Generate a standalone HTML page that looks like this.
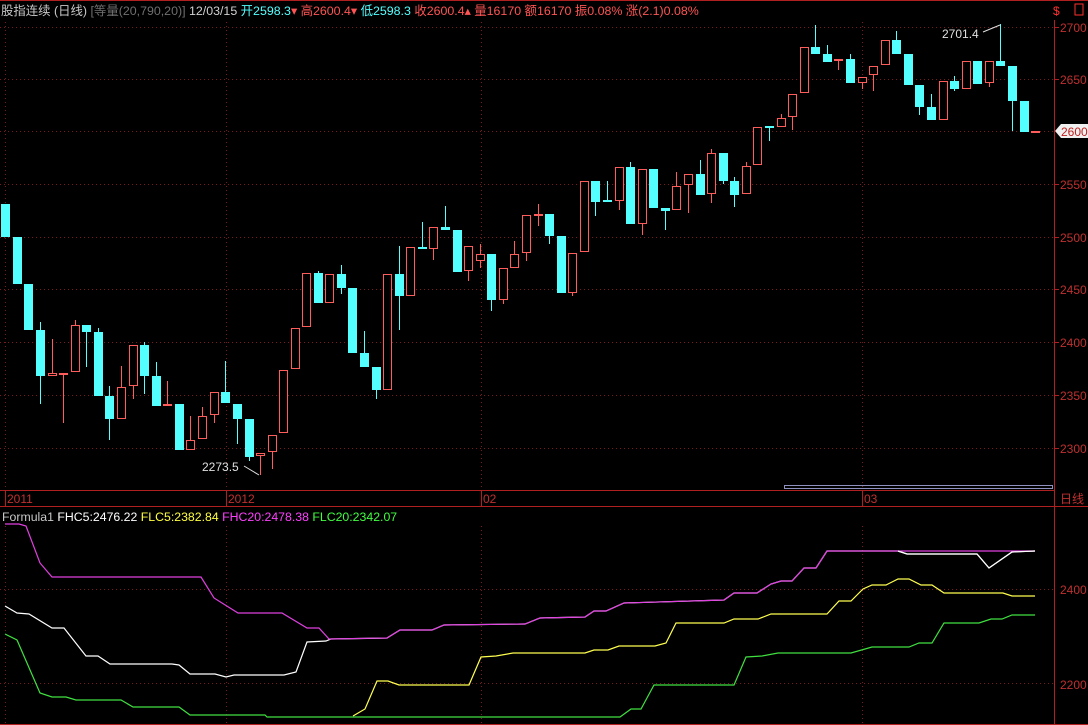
<!DOCTYPE html>
<html><head><meta charset="utf-8"><style>
html,body{margin:0;padding:0;background:#000;width:1088px;height:725px;overflow:hidden}
svg{display:block}
text{font-family:"Liberation Sans","Noto Sans CJK SC",sans-serif}
</style></head><body>
<svg id="s" width="1088" height="725" viewBox="0 0 1088 725" xmlns="http://www.w3.org/2000/svg">
<rect width="1088" height="725" fill="#000"/>
<line x1="0" y1="0.5" x2="1088" y2="0.5" stroke="#b02020"/>
<text y="15" font-size="12.4" fill="#c8c8c8"><tspan x="1">股指连续 (日线)</tspan><tspan fill="#707070"> [等量(20,790,20)]</tspan><tspan fill="#d0d0d0"> 12/03/15 </tspan><tspan fill="#54ffff">开2598.3</tspan><tspan fill="#ff5454">▾ 高2600.4</tspan><tspan fill="#ff5454">▾ </tspan><tspan fill="#54ffff">低2598.3 </tspan><tspan fill="#ff5454">收2600.4▴ 量16170 额16170 振0.08% 涨(2.1)0.08%</tspan></text>
<text x="1053" y="15" font-size="12" fill="#ff3030">$</text>
<rect x="1075" y="4" width="8" height="11" fill="none" stroke="#ff3030"/>
<g id="grid" stroke="#7a1a1a" stroke-dasharray="1,3"></g>
<line x1="1054.5" y1="20" x2="1054.5" y2="725" stroke="#b02020"/>
<line x1="0" y1="490.5" x2="1054" y2="490.5" stroke="#b02020"/>
<line x1="0" y1="506.5" x2="1088" y2="506.5" stroke="#b02020"/>
<line x1="0" y1="724.5" x2="1088" y2="724.5" stroke="#b02020"/>
<g stroke="#b02020"><line x1="5.5" y1="491" x2="5.5" y2="506"/><line x1="226.5" y1="491" x2="226.5" y2="506"/><line x1="481.5" y1="491" x2="481.5" y2="506"/><line x1="862.5" y1="491" x2="862.5" y2="506"/></g>
<g font-size="12" fill="#c03030"><text x="7" y="503">2011</text><text x="228" y="503">2012</text><text x="483" y="503">02</text><text x="864" y="503">03</text><text x="1060" y="503" fill="#c03030">日线</text></g>
<g font-size="12" fill="#c03030" id="ax"></g>
<rect x="784.5" y="485.5" width="268" height="3" fill="none" stroke="#9090c0"/>
<g id="c"></g>
<polygon points="1055,131 1061,124 1088,124 1088,138 1061,138" fill="#f0f0f0"/>
<text x="1061" y="136" font-size="12" fill="#c02020">2600</text>
<text x="202" y="471" font-size="12" fill="#e0e0e0">2273.5</text>
<line x1="244" y1="466" x2="259" y2="475" stroke="#e0e0e0"/>
<text x="942" y="38" font-size="12" fill="#e0e0e0">2701.4</text>
<line x1="983" y1="32" x2="1000" y2="25" stroke="#e0e0e0"/>
<text y="521" font-size="12.3"><tspan x="2" fill="#c8c8c8">Formula1 </tspan><tspan fill="#ffffff">FHC5:2476.22 </tspan><tspan fill="#ffff40"> FLC5:2382.84 </tspan><tspan fill="#ff40ff"> FHC20:2478.38 </tspan><tspan fill="#40ff40"> FLC20:2342.07</tspan></text>
<g fill="none" stroke-width="1.2">
<polyline stroke="#ffffff" points="5,606 17,613 29,614 52,628 64,628 86,656 98,656 110,664 172,664 179,665 190,674 215,674 226,677 234,675 284,675 296,672 307,642 326,641 331,639 387,638 400,630 432,630 444,625 525,624 540,618 585,617 594,611 606,611 624,603 724,600 734,593 757,593 771,584 781,581 792,581 804,568 816,568 827,551 898,551 907,554 977,554 989,568 1012,552 1035,551"/>
<polyline stroke="#e040e0" points="5,524 19,524 26,526 40,563 52,577 201,577 214,598 238,613 282,613 307,628 319,628 329,639 387,638 400,630 432,630 444,625 525,624 540,618 585,617 594,611 606,611 624,603 724,600 734,593 757,593 771,584 781,581 792,581 804,568 816,568 827,551 898,551 900,551 1035,551"/>
<polyline stroke="#ffffff" points="898,551 907,554 977,554 989,568 1012,552 1035,551"/>
<polyline stroke="#ffff50" points="353,716 365,709 377,681 388,681 399,685 469,685 481,657 496,656 513,653 585,653 594,650 608,650 619,646 655,646 666,643 676,623 724,623 734,619 758,619 771,614 827,614 839,601 851,601 863,589 872,585 886,585 898,579 909,579 921,585 932,585 944,593 1003,593 1012,596 1035,596"/>
<polyline stroke="#40e040" points="5,634 17,640 40,693 52,697 66,697 76,700 121,700 133,707 179,707 190,715 265,715 267,717 620,717 631,709 641,709 654,685 734,685 746,657 762,656 778,653 851,653 872,647 909,647 919,643 932,643 944,623 979,623 991,619 1002,619 1012,615 1035,615"/>
</g>
<g font-size="12" fill="#c03030"><text x="1060" y="594">2400</text><text x="1060" y="689">2200</text></g>
</svg>
<script>
var NS="http://www.w3.org/2000/svg",s=document.getElementById('s');
function el(p,t,a){var e=document.createElementNS(NS,t);for(var k in a)e.setAttribute(k,a[k]);p.appendChild(e);return e;}
var g=document.getElementById('grid');
[27,79,131,184,237,289,342,395,448].forEach(function(y){el(g,'line',{x1:0,y1:y+.5,x2:1054,y2:y+.5});});
[589,683].forEach(function(y){el(g,'line',{x1:0,y1:y+.5,x2:1054,y2:y+.5});});
[5,226,481,862].forEach(function(x){el(g,'line',{x1:x+.5,y1:22,x2:x+.5,y2:490});el(g,'line',{x1:x+.5,y1:526,x2:x+.5,y2:724});});
var ax=document.getElementById('ax');
[[2700,27],[2650,79],[2550,184],[2500,237],[2450,289],[2400,342],[2350,395],[2300,448]].forEach(function(a){var t=el(ax,'text',{x:1060,y:a[1]+5});t.textContent=a[0];el(s,'line',{x1:1055,y1:a[1]+.5,x2:1059,y2:a[1]+.5,stroke:'#b02020'});});
var C=[[1,204,237,0,0,0],[13,237,284,0,0,0],[24,284,330,0,0,0],[36,330,376,322,404,0],[48,373,376,339,376,1],[59,373,375,373,423,1],[71,325,372,320,372,1],[82,325,332,325,367,0],[94,332,396,328,396,0],[105,396,419,386,440,0],[117,387,419,366,419,1],[129,345,386,345,399,1],[140,345,376,342,394,0],[152,376,406,362,406,0],[163,404,406,381,406,1],[175,404,450,0,0,0],[186,440,450,416,450,1],[198,416,439,407,439,1],[210,392,415,392,423,1],[221,392,403,361,403,0],[233,404,419,404,444,0],[245,419,457,419,461,0],[256,453,456,453,475,1],[268,435,452,435,469,1],[279,370,433,0,0,1],[291,328,369,0,0,1],[302,273,327,0,0,1],[314,273,303,271,303,0],[325,274,303,0,0,1],[337,274,288,265,294,0],[348,288,353,0,0,0],[360,353,367,331,367,0],[372,367,390,367,399,0],[383,274,390,0,0,1],[395,274,296,246,330,0],[406,247,296,0,0,1],[418,247,249,222,249,0],[429,227,249,227,260,1],[441,227,230,206,230,0],[453,230,272,0,0,0],[464,246,271,246,281,1],[476,254,261,244,268,1],[487,254,300,254,311,0],[499,268,300,268,304,1],[510,254,268,241,268,1],[522,215,253,215,261,1],[534,214,216,204,226,1],[545,214,236,214,244,0],[557,236,293,0,0,0],[568,253,293,253,296,1],[580,181,252,0,0,1],[591,181,202,181,216,0],[603,200,202,181,202,0],[615,167,201,167,210,1],[626,167,224,162,224,0],[638,169,224,169,235,1],[649,169,208,0,0,0],[661,208,211,208,230,0],[672,186,210,172,210,1],[684,174,185,174,213,1],[696,174,195,160,195,0],[707,153,194,149,203,1],[719,153,181,153,184,0],[730,181,195,177,207,0],[742,166,194,162,194,1],[753,127,165,0,0,1],[765,126,128,126,141,0],[777,118,127,114,127,1],[788,94,117,94,130,1],[800,47,93,0,0,1],[811,47,54,25,54,0],[823,54,62,45,62,0],[834,59,61,59,70,1],[846,59,83,54,83,0],[858,77,83,77,89,1],[869,66,75,66,91,1],[881,40,65,0,0,1],[892,40,54,31,54,0],[904,54,85,0,0,0],[915,85,107,85,115,0],[927,107,120,94,120,0],[939,81,120,0,0,1],[950,81,89,76,91,0],[962,61,89,0,0,1],[973,61,84,0,0,0],[985,61,83,61,87,1],[996,61,66,24,66,0],[1008,66,101,66,131,0],[1020,101,132,0,0,0],[1031,131,132,131,132,1]];
var cg=document.getElementById('c');
C.forEach(function(c){var x=c[0],t=c[1],b=c[2],wt=c[3]||t,wb=c[4]||b,red=c[5];var col=red?'#ff5c5c':'#54ffff';
el(cg,'line',{x1:x+4.5,y1:wt,x2:x+4.5,y2:wb,stroke:col});
if(red){if(b-t<3)el(cg,'rect',{x:x,y:t,width:9,height:Math.max(2,b-t),fill:col});else el(cg,'rect',{x:x+.5,y:t+.5,width:8,height:b-t-1,fill:'#000',stroke:col});}
else el(cg,'rect',{x:x,y:t,width:9,height:Math.max(2,b-t),fill:col});});
</script>
</body></html>
